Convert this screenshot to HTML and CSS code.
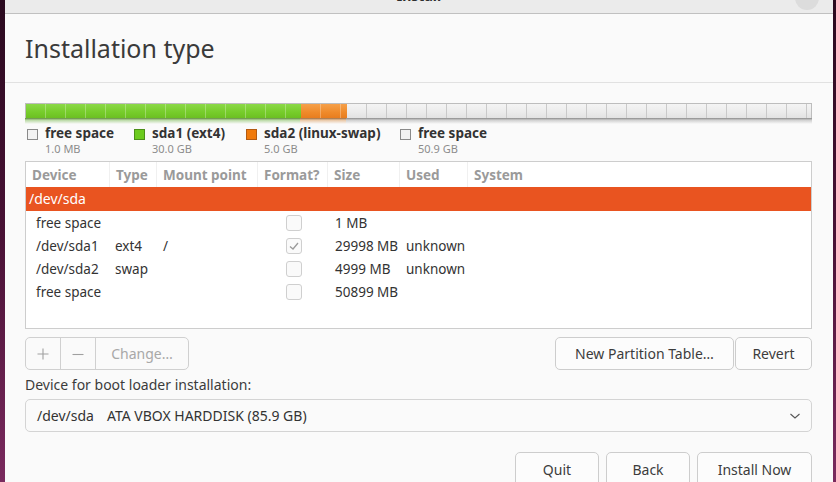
FILE: index.html
```html
<!DOCTYPE html>
<html>
<head>
<meta charset="utf-8">
<link rel="stylesheet" href="styles.css">
</head>
<body>
<div class="window">
  <div class="titlebar">
    <span class="wintitle">Install</span>
    <span class="closebtn"></span>
  </div>
  <div class="header"><h1>Installation type</h1></div>
  <div class="content">
    <div class="pbar">
      <div class="seg green" style="width:35%"></div>
      <div class="seg orange" style="width:5.85%"></div>
      <div class="seg gray"></div>
    </div>
    <div class="pbar-shadow">
      <div class="sh green-sh" style="width:35%"></div>
      <div class="sh orange-sh" style="width:5.85%"></div>
      <div class="sh gray-sh"></div>
    </div>
    <div class="legend">
      <div class="litem w1"><span class="sq sq-free"></span><div><div class="lname">free space</div><div class="lsize">1.0 MB</div></div></div>
      <div class="litem w2"><span class="sq sq-green"></span><div><div class="lname">sda1 (ext4)</div><div class="lsize">30.0 GB</div></div></div>
      <div class="litem w3"><span class="sq sq-orange"></span><div><div class="lname">sda2 (linux-swap)</div><div class="lsize">5.0 GB</div></div></div>
      <div class="litem"><span class="sq sq-free"></span><div><div class="lname">free space</div><div class="lsize">50.9 GB</div></div></div>
    </div>
    <div class="table">
      <div class="row head">
        <div class="c c1">Device</div><div class="c c2">Type</div><div class="c c3">Mount point</div><div class="c c4">Format?</div><div class="c c5">Size</div><div class="c c6">Used</div><div class="c c7">System</div>
      </div>
      <div class="row sel"><div class="c c1 disk">/dev/sda</div></div>
      <div class="row data">
        <div class="c c1">free space</div><div class="c c2"></div><div class="c c3"></div><div class="c c4"><span class="cb"></span></div><div class="c c5">1 MB</div><div class="c c6"></div><div class="c c7"></div>
      </div>
      <div class="row data">
        <div class="c c1">/dev/sda1</div><div class="c c2">ext4</div><div class="c c3">/</div><div class="c c4"><span class="cb"><svg width="16" height="16" viewBox="0 0 16 16"><polyline points="4,8.5 7,11 12,5" fill="none" stroke="#9a9a9a" stroke-width="1.3"/></svg></span></div><div class="c c5">29998 MB</div><div class="c c6">unknown</div><div class="c c7"></div>
      </div>
      <div class="row data">
        <div class="c c1">/dev/sda2</div><div class="c c2">swap</div><div class="c c3"></div><div class="c c4"><span class="cb"></span></div><div class="c c5">4999 MB</div><div class="c c6">unknown</div><div class="c c7"></div>
      </div>
      <div class="row data">
        <div class="c c1">free space</div><div class="c c2"></div><div class="c c3"></div><div class="c c4"><span class="cb"></span></div><div class="c c5">50899 MB</div><div class="c c6"></div><div class="c c7"></div>
      </div>
    </div>
    <div class="toolrow">
      <div class="btngroup">
        <div class="gb gb-plus"><svg width="12" height="12" viewBox="0 0 12 12"><path d="M6 0.5V11.5M0.5 6H11.5" stroke="#a0a0a0" stroke-width="1.1" fill="none"/></svg></div>
        <div class="gb gb-minus"><svg width="12" height="12" viewBox="0 0 12 12"><path d="M0.5 6.5H11.5" stroke="#a0a0a0" stroke-width="1.1" fill="none"/></svg></div>
        <div class="gb gb-change">Change…</div>
      </div>
      <div class="spacer"></div>
      <div class="btn btn-npt">New Partition Table…</div>
      <div class="btn btn-revert">Revert</div>
    </div>
    <div class="bootlabel">Device for boot loader installation:</div>
    <div class="combo">
      <span class="cdev">/dev/sda</span><span class="cname">ATA VBOX HARDDISK (85.9 GB)</span>
      <svg class="chev" width="12" height="8" viewBox="0 0 12 8"><polyline points="1.5,2 6,6 10.5,2" fill="none" stroke="#555" stroke-width="1.1"/></svg>
    </div>
    <div class="bottom">
      <div class="btn b-quit">Quit</div>
      <div class="btn b-back">Back</div>
      <div class="btn b-install">Install Now</div>
    </div>
  </div>
</div>
</body>
</html>
```

FILE: styles.css
```css
html, body {
  margin: 0;
  padding: 0;
  width: 836px;
  height: 482px;
  overflow: hidden;
}
body {
  background: linear-gradient(180deg, #2a0a1f 0%, #4a1236 50%, #7a2a5e 100%);
  font-family: "Noto Sans", "Lato", sans-serif;
  color: #3c3c3c;
}
.window {
  margin: 0 3px 0 5px;
  height: 482px;
  background: #fafafa;
  overflow: hidden;
}
.titlebar {
  height: 13px;
  background: #ebebeb;
  border-bottom: 1px solid #c0c0c0;
  position: relative;
  overflow: hidden;
  text-align: center;
}
.wintitle {
  display: block;
  margin-top: -13px;
  font-weight: bold;
  font-size: 14px;
  line-height: 18px;
  color: #2e2e2e;
}
.closebtn {
  position: absolute;
  right: 14px;
  top: -14px;
  width: 24px;
  height: 24px;
  border-radius: 50%;
  background: #dcdcdc;
}
.header {
  height: 68px;
  border-bottom: 1px solid #e1e1e1;
  padding: 0 20px;
  display: flex;
  align-items: center;
}
.header h1 {
  margin: 0;
  font-weight: normal;
  font-size: 25px;
  line-height: 30px;
  color: #3a3a3a;
}
.content {
  padding: 20px 21px 0 20px;
}
.pbar {
  display: flex;
  height: 14px;
  border: 1px solid #bdbdbd;
  border-bottom: none;
}
.seg { height: 100%; }
.green {
  background:
    repeating-linear-gradient(90deg, transparent 0, transparent 19px, rgba(255,255,255,0.28) 19px, rgba(255,255,255,0.28) 20px),
    linear-gradient(180deg, #8bd847 0%, #76cc2a 60%, #6cbf22 100%);
}
.orange {
  background:
    repeating-linear-gradient(90deg, transparent 0, transparent 19px, rgba(255,255,255,0.28) 19px, rgba(255,255,255,0.28) 20px),
    linear-gradient(180deg, #f5a04a 0%, #ef8a2a 60%, #e87d1f 100%);
}
.gray {
  flex: 1;
  background:
    repeating-linear-gradient(90deg, transparent 0, transparent 19px, #c9c9c9 19px, #c9c9c9 20px),
    linear-gradient(180deg, #f4f4f4 0%, #ebebeb 60%, #e2e2e2 100%);
}
.pbar-shadow {
  display: flex;
  height: 6px;
}
.sh { height: 100%; }
.green-sh { background: linear-gradient(180deg, #5d8a3a 0%, #b9d9a4 35%, rgba(250,250,250,0) 100%); }
.orange-sh { background: linear-gradient(180deg, #9c6a3a 0%, #e9c6a4 35%, rgba(250,250,250,0) 100%); }
.gray-sh { flex: 1; background: linear-gradient(180deg, #8a8a8a 0%, #cfcfcf 35%, rgba(250,250,250,0) 100%); }

.legend {
  display: flex;
  padding-left: 2px;
  margin-top: 0;
}
.litem {
  display: flex;
  align-items: flex-start;
}
.w1 { width: 107px; }
.w2 { width: 112px; }
.w3 { width: 154px; }
.sq {
  width: 9px;
  height: 9px;
  margin-top: 5px;
  margin-right: 7px;
  border: 1px solid #8a8a8a;
}
.sq-free { background: #f2f2f2; }
.sq-green { background: #6ccb1e; border-color: #4c8f18; }
.sq-orange { background: #f07a0c; border-color: #b35a10; }
.lname {
  font-weight: bold;
  font-size: 13.5px;
  line-height: 18px;
  color: #333;
  white-space: nowrap;
}
.lsize {
  font-size: 11px;
  line-height: 13px;
  color: #8c8c8c;
}
.table {
  margin-top: 6px;
  height: 166px;
  background: #ffffff;
  border: 1px solid #cdcdcd;
}
.row {
  display: grid;
  grid-template-columns: 84px 47px 101px 70px 72px 68px 1fr;
  align-items: center;
  white-space: nowrap;
}
.head {
  height: 25px;
  font-weight: bold;
  font-size: 13.5px;
  color: #9a9a9a;
}
.head .c {
  height: 25px;
  line-height: 26px;
  padding-left: 6px;
  border-right: 1px solid #f0f0f0;
  box-sizing: border-box;
  overflow: hidden;
}
.head .c7 { border-right: none; }
.sel {
  height: 24px;
  background: #e95420;
  display: block;
}
.sel .disk {
  color: #ffffff;
  font-size: 14px;
  line-height: 24px;
  padding-left: 3px;
}
.data {
  height: 23px;
  font-size: 13.5px;
  color: #333;
}
.data .c1 { padding-left: 10px; }
.data .c2 { padding-left: 5px; }
.data .c3 { padding-left: 6px; }
.data .c4 { display: flex; justify-content: center; padding-left: 1px; }
.data .c5 { padding-left: 7px; }
.data .c6 { padding-left: 6px; }
.cb {
  width: 14px;
  height: 14px;
  border: 1px solid #cfcfcf;
  border-radius: 3px;
  background: #fafafa;
  position: relative;
  display: block;
}
.cb svg { position: absolute; left: -1px; top: -1px; }
.toolrow {
  display: flex;
  margin-top: 8px;
  height: 33px;
}
.btngroup {
  display: flex;
  border: 1px solid #d0d0d0;
  border-radius: 5px;
  height: 31px;
  width: 162px;
  color: #a8a8a8;
  font-size: 14px;
}
.gb {
  display: flex;
  align-items: center;
  justify-content: center;
}
.gb-plus { width: 34px; border-right: 1px solid #d0d0d0; }
.gb-minus { width: 34px; border-right: 1px solid #d0d0d0; }
.gb svg { display: block; }
.gb-change { flex: 1; }
.spacer { flex: 1; }
.btn {
  box-sizing: border-box;
  height: 33px;
  border: 1px solid #cdcdcd;
  border-radius: 5px;
  background: #fcfcfc;
  display: flex;
  align-items: center;
  justify-content: center;
  font-size: 14px;
  color: #3c3c3c;
  white-space: nowrap;
}
.btn-npt { width: 179px; }
.btn-revert { width: 77px; margin-left: 1px; }
.bootlabel {
  margin-top: 6px;
  font-size: 14px;
  line-height: 18px;
  color: #3c3c3c;
}
.combo {
  margin-top: 5px;
  height: 33px;
  box-sizing: border-box;
  border: 1px solid #d4d4d4;
  border-radius: 5px;
  background: #fafafa;
  display: flex;
  align-items: center;
  padding-left: 11px;
  padding-right: 10px;
  font-size: 14px;
  color: #333;
}
.cdev { margin-right: 13px; }
.cname { flex: 1; }
.chev { display: block; }
.bottom {
  margin-top: 20px;
  display: flex;
  justify-content: flex-end;
  gap: 7px;
}
.bottom .btn { height: 40px; align-items: flex-start; padding-top: 7px; }
.b-quit { width: 84px; }
.b-back { width: 84px; }
.b-install { width: 115px; }
```
